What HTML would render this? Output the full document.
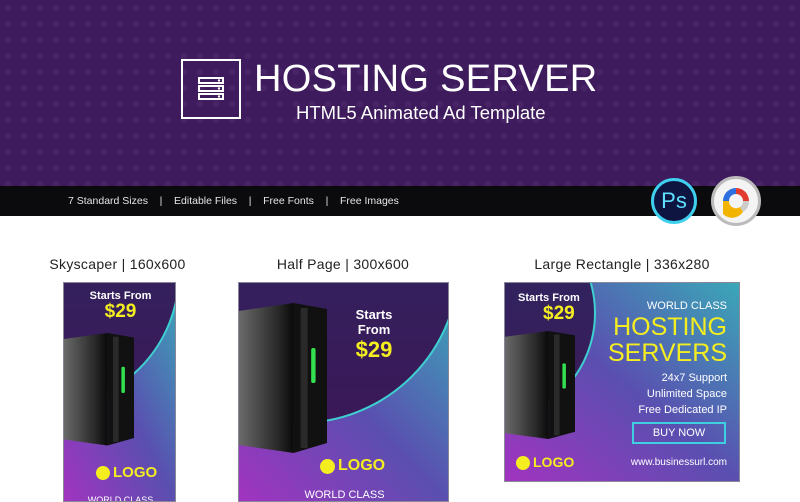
<!DOCTYPE html>
<html><head><meta charset="utf-8"><style>
*{margin:0;padding:0;box-sizing:border-box}
body{width:800px;height:500px;overflow:hidden;background:#fff;font-family:"Liberation Sans",sans-serif;position:relative}
.hdr{position:absolute;left:0;top:0;width:800px;height:186px;background:#3e1b5c;
background-image:radial-gradient(circle at 50% 50%,rgba(90,50,120,.35) 3px,transparent 4px);background-size:16px 16px}
.bar{position:absolute;left:0;top:186px;width:800px;height:30px;background:#0b0a0c;color:#e6e6e6;font-size:10.5px;line-height:30px;padding-left:68px;white-space:pre}
.abs{position:absolute}
.lbl{position:absolute;top:256px;font-size:14px;color:#222;text-align:center;letter-spacing:.3px}
.ad{position:absolute;overflow:hidden;border:1px solid #889}
.y{color:#f4ee20;font-weight:bold}
.w{color:#fff}
</style></head><body>
<div class="hdr"></div>
<div class="abs" style="left:181px;top:59px;width:60px;height:60px;border:2px solid #fff"></div>
<svg class="abs" style="left:197px;top:76px" width="28" height="26" viewBox="0 0 28 26">
<g fill="none" stroke="#fff" stroke-width="2"><rect x="2" y="2" width="24" height="5"/><rect x="2" y="10" width="24" height="5"/><rect x="2" y="18" width="24" height="5"/></g>
<g fill="#fff"><circle cx="22" cy="4.5" r="1.2"/><circle cx="22" cy="12.5" r="1.2"/><circle cx="22" cy="20.5" r="1.2"/></g></svg>
<div class="abs w" style="left:254px;top:57px;font-size:38px;letter-spacing:.3px;line-height:44px">HOSTING SERVER</div>
<div class="abs w" style="left:296px;top:101px;font-size:18.5px;line-height:24px">HTML5 Animated Ad Template</div>
<div class="bar">7 Standard Sizes    |    Editable Files    |    Free Fonts    |    Free Images</div>
<div class="abs" style="left:651px;top:178px;width:46px;height:46px;border-radius:50%;background:#0d1540;border:3px solid #3fd0f0;color:#5fe0ff;font-size:22px;text-align:center;line-height:39px">Ps</div>
<div class="abs" style="left:711px;top:176px;width:50px;height:50px;border-radius:50%;background:#f4f4f4;border:3px solid #bbb"></div>
<svg class="abs" style="left:719px;top:184px" width="34" height="34" viewBox="0 0 34 34">
<path d="M4 17 A13 13 0 0 1 17 4 L17 10 A7 7 0 0 0 10 17Z" fill="#2d6fe0"/>
<path d="M17 4 A13 13 0 0 1 30 17 L24 17 A7 7 0 0 0 17 10Z" fill="#e23a2e"/>
<path d="M30 17 A13 13 0 0 1 24 28 L21 23 A7 7 0 0 0 24 17Z" fill="#ccc"/>
<path d="M4 17 L10 17 A7 7 0 0 0 21 23 L24 28 A13 13 0 0 1 4 30Z" fill="#f3b400"/></svg>

<div class="lbl" style="left:40px;width:155px">Skyscaper | 160x600</div>
<div class="lbl" style="left:238px;width:210px">Half Page | 300x600</div>
<div class="lbl" style="left:504px;width:236px">Large Rectangle | 336x280</div>

<svg width="0" height="0" style="position:absolute"><defs>
<linearGradient id="bg" x1="0" y1="1" x2="1" y2="0"><stop offset="0" stop-color="#a233c0"/><stop offset=".5" stop-color="#5a4fb0"/><stop offset="1" stop-color="#3aa8b8"/></linearGradient>
<linearGradient id="dk" x1="0" y1="0" x2="0" y2="1"><stop offset="0" stop-color="#2c2a62"/><stop offset="1" stop-color="#3b1858"/></linearGradient>
<linearGradient id="sf" x1="0" y1="0" x2="1" y2="0"><stop offset="0" stop-color="#6a6a6a"/><stop offset=".7" stop-color="#2a2a2a"/><stop offset="1" stop-color="#0a0a0a"/></linearGradient>
<g id="srv"><polygon points="0,8 62,0 62,150 0,142" fill="url(#sf)"/><polygon points="62,0 100,6 100,140 62,150" fill="#111"/><rect x="70" y="5" width="8" height="140" fill="#2a2a2a"/><rect x="82" y="45" width="5" height="35" rx="2" fill="#33e050"/></g>
</defs></svg>

<div class="ad" style="left:63px;top:282px;width:113px;height:220px">
<svg width="113" height="220" style="position:absolute;left:0;top:0">
<rect width="113" height="220" fill="url(#bg)"/><circle cx="-20" cy="-10" r="135" fill="url(#dk)" stroke="#3ed0d0" stroke-width="2"/>
<use href="#srv" transform="translate(0,50) scale(0.7,0.75)"/></svg>
<div class="abs w" style="left:0;width:113px;top:7px;text-align:center;font-size:11px;font-weight:bold">Starts From</div>
<div class="abs y" style="left:0;width:113px;top:18px;text-align:center;font-size:19px">$29</div>
<div class="abs" style="left:32px;top:183px;width:14px;height:14px;border-radius:50%;background:#f4ee20"></div>
<div class="abs y" style="left:49px;top:181px;font-size:15px">LOGO</div>
<div class="abs w" style="left:0;width:113px;top:212px;text-align:center;font-size:9px">WORLD CLASS</div>
</div>

<div class="ad" style="left:238px;top:282px;width:211px;height:220px">
<svg width="211" height="220" style="position:absolute;left:0;top:0">
<rect width="211" height="220" fill="url(#bg)"/><circle cx="60" cy="-20" r="160" fill="url(#dk)" stroke="#3ed0d0" stroke-width="2"/>
<use href="#srv" transform="translate(0,20) scale(0.88,1)"/></svg>
<div class="abs w" style="left:95px;width:80px;top:24px;text-align:center;font-size:13px;font-weight:bold;line-height:15px">Starts<br>From</div>
<div class="abs y" style="left:95px;width:80px;top:54px;text-align:center;font-size:22px">$29</div>
<div class="abs" style="left:81px;top:176px;width:15px;height:15px;border-radius:50%;background:#f4ee20"></div>
<div class="abs y" style="left:99px;top:174px;font-size:16px">LOGO</div>
<div class="abs w" style="left:0;width:211px;top:206px;text-align:center;font-size:11px">WORLD CLASS</div>
</div>

<div class="ad" style="left:504px;top:282px;width:236px;height:200px">
<svg width="236" height="200" style="position:absolute;left:0;top:0">
<rect width="236" height="200" fill="url(#bg)"/><circle cx="-20" cy="30" r="110" fill="url(#dk)" stroke="#3ed0d0" stroke-width="2"/>
<use href="#srv" transform="translate(0,48) scale(0.7,0.72)"/></svg>
<div class="abs w" style="left:13px;top:9px;font-size:11px;font-weight:bold">Starts From</div>
<div class="abs y" style="left:38px;top:20px;font-size:19px">$29</div>
<div class="abs w" style="left:110px;width:112px;top:17px;text-align:right;font-size:11px">WORLD CLASS</div>
<div class="abs y" style="left:100px;width:122px;top:31px;text-align:right;font-size:25px;line-height:26px;font-weight:normal">HOSTING<br>SERVERS</div>
<div class="abs w" style="left:100px;width:122px;top:87px;text-align:right;font-size:11px;line-height:16px">24x7 Support<br>Unlimited Space<br>Free Dedicated IP</div>
<div class="abs w" style="left:127px;top:139px;width:94px;height:22px;border:2px solid #3ed0e0;text-align:center;font-size:11px;line-height:18px">BUY NOW</div>
<div class="abs" style="left:11px;top:173px;width:14px;height:14px;border-radius:50%;background:#f4ee20"></div>
<div class="abs y" style="left:28px;top:171px;font-size:14px">LOGO</div>
<div class="abs w" style="left:110px;width:112px;top:174px;text-align:right;font-size:10px">www.businessurl.com</div>
</div>
</body></html>
